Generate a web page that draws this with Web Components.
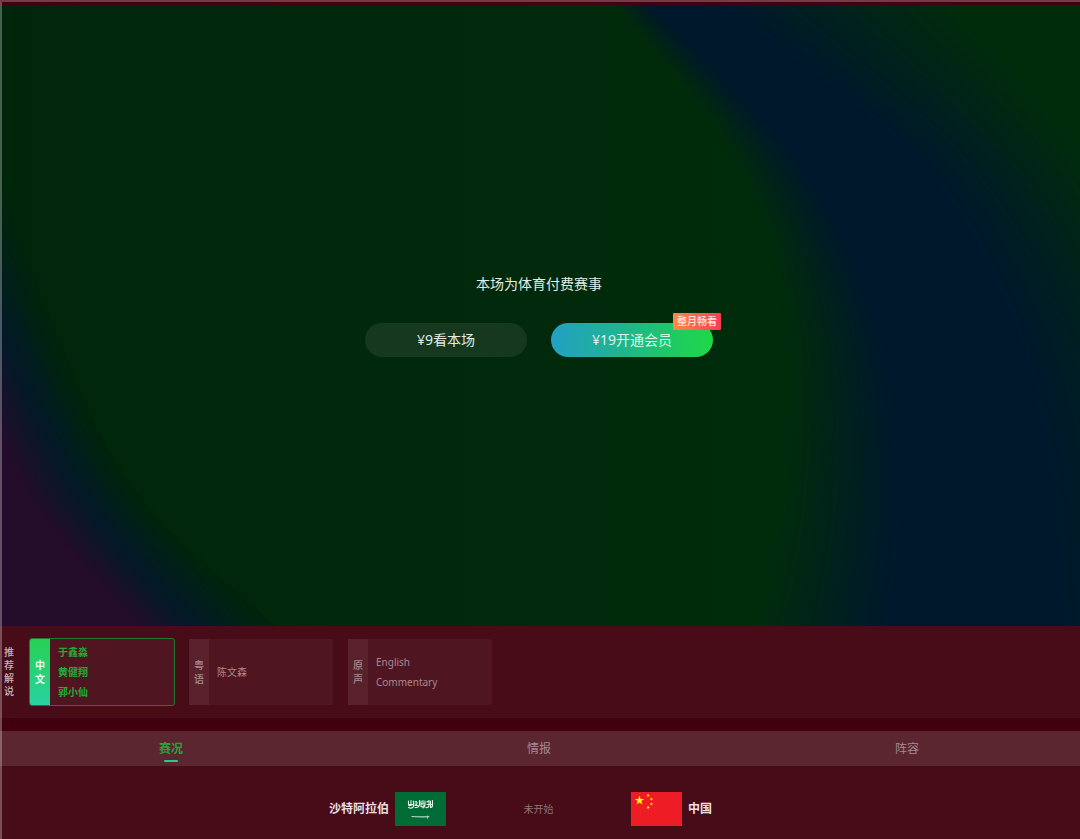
<!DOCTYPE html>
<html lang="zh-CN">
<head>
<meta charset="utf-8">
<meta name="viewport" content="width=device-width, initial-scale=1">
<title>沙特阿拉伯 - 中国</title>
<style>
  body { margin: 0; background: #480c18; font-family: "Noto Sans", "Noto Sans CJK SC", sans-serif; color: #eee; }
</style>
</head>
<body>
<match-page></match-page>

<script>
const define = (name, html, setup) => {
  const tpl = document.createElement('template');
  tpl.innerHTML = html;
  customElements.define(name, class extends HTMLElement {
    constructor() {
      super();
      this.attachShadow({ mode: 'open' }).append(tpl.content.cloneNode(true));
    }
    connectedCallback() { if (setup) setup(this, this.shadowRoot); }
  });
};

/* Backdrop of colour bands: each band blends between two curves, given as x at fixed y stops. */
define('aurora-backdrop', `
<style>
  :host { display: block; }
  svg { display: block; width: 100%; height: 100%; }
</style>
<svg viewBox="0 0 1080 620" preserveAspectRatio="none" aria-hidden="true">
  <defs><linearGradient id="base"><stop offset="0" stop-color="#00250b"/><stop offset=".72" stop-color="#002c0b"/></linearGradient></defs>
  <rect width="1080" height="620" fill="url(#base)"/>
  <g></g>
</svg>`, (host, root) => {
  const ys = [0, 157, 320, 484, 620];
  const green = [0, 44, 11], dark = [0, 37, 11], blue = [0, 24, 44], dusk = [4, 26, 41], purple = [36, 13, 43];
  const mix = (a, b, t) => a.map((v, i) => v + (b[i] - v) * t);
  const curve = (xs, edge) => {
    let d = `M${edge} 0L${xs[0]} 0`;
    for (let i = 0; i < 4; i++) {
      const p = n => { const k = Math.max(0, Math.min(4, n)); return [xs[k], ys[k]]; };
      const [a, b, c, e] = [p(i - 1), p(i), p(i + 1), p(i + 2)];
      d += `C${b[0] + (c[0] - a[0]) / 6} ${b[1] + (c[1] - a[1]) / 6} ${c[0] - (e[0] - b[0]) / 6} ${c[1] - (e[1] - b[1]) / 6} ${c[0]} ${c[1]}`;
    }
    return d + `L${edge} 620Z`;
  };
  let out = '';
  const band = (from, to, c1, c2, edge) => {
    for (let i = 0; i <= 32; i++) {
      const t = i / 32;
      out += `<path d="${curve(mix(from, to, t), edge)}" fill="rgb(${mix(c1, c2, t).map(Math.round)})"/>`;
    }
  };
  band([613, 733, 783, 777, 750], [650, 798, 877, 898, 888], green, blue, 1700);
  band([717, 915, 1010, 1047, 1057], [955, 1092, 1190, 1255, 1270], blue, green, 1700);
  band([-40, -3, 53, 135, 275], [-110, -60, 0, 79, 192], dark, dusk, -400);
  band([-110, -60, 0, 79, 192], [-160, -110, -40, 26, 140], dusk, purple, -400);
  root.querySelector('g').innerHTML = out;
});

define('pay-button', `
<style>
  :host { display: block; position: relative; }
  button { display: block; width: 162px; height: 34px; padding: 0; border: 0; border-radius: 17px;
    background: #15381f; color: #e4ece5; font: inherit; font-size: 14px; line-height: 34px; cursor: pointer; }
  :host([primary]) button { background: linear-gradient(100deg, #229fc8, #20b58c 45%, #1fd64b 95%); color: #dcf7e8; }
  ::slotted([slot=badge]) { position: absolute; top: -10px; right: -8px; padding: 0 4px; border-radius: 1px;
    background: linear-gradient(90deg, #ff8b45, #fb3b55); color: #ffe6dc; font-size: 10px; font-weight: 500; line-height: 17px; }
</style>
<button type="button"><slot></slot></button><slot name="badge"></slot>`);

define('player-stage', `
<style>
  :host { display: grid; min-height: 300px; overflow: hidden; }
  aurora-backdrop, .panel { grid-area: 1 / 1; min-height: 0; }
  aurora-backdrop { contain: size; }
  .panel { position: relative; display: flex; flex-direction: column; align-items: center; justify-content: center; gap: 29px; padding-right: 2px; }
  p { margin: 0; font-size: 14px; line-height: 20px; color: #e4ece5; }
  .row { display: flex; gap: 24px; }
</style>
<aurora-backdrop></aurora-backdrop>
<div class="panel">
  <p>本场为体育付费赛事</p>
  <div class="row">
    <pay-button>¥9看本场</pay-button>
    <pay-button primary>¥19开通会员<span slot="badge">整月畅看</span></pay-button>
  </div>
</div>`);

define('voice-card', `
<style>
  :host { display: block; }
  button { display: flex; align-items: stretch; width: 144px; height: 66px; padding: 0; border: 0; border-radius: 1px;
    background: #4f1520; color: #a98a90; font: inherit; font-size: 10px; text-align: left; cursor: pointer; }
  .lang { display: flex; align-items: center; justify-content: center; width: 20px; background: #59212c; font-weight: 500; line-height: 14px; }
  .lang span { width: 10px; word-break: break-all; }
  .names { display: flex; flex-direction: column; justify-content: center; padding-left: 8px; line-height: 20px; }
  :host([selected]) button { outline: 1px solid #1f7a2e; border-radius: 2px; color: #1fae38; font-weight: 700; }
  :host([selected]) .lang { background: linear-gradient(#27d053, #29d2a0); color: #eafff2; }
</style>
<button type="button"><span class="lang"><span><slot name="lang"></slot></span></span><span class="names"><slot></slot></span></button>`);

define('voice-bar', `
<style>
  :host { display: flex; align-items: center; gap: 15px; padding: 13px 4px; background: #480c18; }
  h2 { width: 10px; margin: 0 1px 0 0; font-size: 10px; font-weight: 500; line-height: 13px; color: #c9b3b8; word-break: break-all; }
  voice-card span { display: block; }
</style>
<h2>推荐解说</h2>
<voice-card selected><b slot="lang">中文</b><span>于鑫淼</span><span>黄健翔</span><span>郭小仙</span></voice-card>
<voice-card><span slot="lang">粤语</span><span>陈文森</span></voice-card>
<voice-card><span slot="lang">原声</span><span>English</span><span>Commentary</span></voice-card>`);

define('match-tabs', `
<style>
  :host { display: block; overflow: hidden; background: #5b2630; border-top: 13px solid #40000f; }
  nav { display: grid; grid-template-columns: repeat(3, 1fr); margin: 0 -11px 0 -13px; }
  button { position: relative; height: 35px; padding: 0; border: 0; background: none; color: #a58a90; font: inherit; font-size: 12px; line-height: 35px; cursor: pointer; }
  [aria-current] { color: #23a53a; font-weight: 700; }
  [aria-current]::after { content: ""; position: absolute; left: calc(50% - 7px); bottom: 4px; width: 14px; height: 2px; border-radius: 1px; background: #2ec78a; }
</style>
<nav>
  <button type="button" aria-current="true">赛况</button>
  <button type="button">情报</button>
  <button type="button">阵容</button>
</nav>`);

define('score-row', `
<style>
  :host { display: grid; grid-template-columns: 1fr 185px 1fr; align-items: center; padding: 26px 3px 13px 0; background: #480c18; }
  .team { display: flex; align-items: center; gap: 6px; font-size: 12px; line-height: 18px; font-weight: 700; color: #ecdfe2; }
  .home { justify-content: flex-end; }
  svg { display: block; width: 51px; height: 34px; }
  .state { text-align: center; font-size: 10px; line-height: 18px; color: #91727a; }
</style>
<div class="team home"><span>沙特阿拉伯</span>
  <svg viewBox="0 0 51 34" aria-hidden="true">
    <rect width="51" height="34" fill="#006c35"/>
    <g fill="none" stroke="#fff" stroke-linecap="round">
      <path stroke-width="1.100" stroke-opacity=".9" d="M13.500 9v3.500q0 1.500 2 1l2-1M16 8.500v3M13.500 15.500q3.500 1.500 5-1V9M20 10q2-1 2 1t-2 1M20 15.500q4 .5 4.500-2.500V8.500M26 9v5.500q1.500 1 3-1M28 8.500v3M30 9v4q0 2-2 3M31 15.500q2 .5 3-1.500V8.500M35.500 9v6.500M37.500 8.500v5.500q-.5 1.500-2 1.500M32 10l1.500-1M14 12.500h4M20 13.500h3M26 12h4M32 12.500h5"/>
      <path stroke-width="1.100" stroke-opacity=".75" d="M17 24.500q5 .6 17 .3M32.500 24v2"/>
    </g>
  </svg>
</div>
<div class="state">未开始</div>
<div class="team">
  <svg viewBox="0 0 51 34" aria-hidden="true">
    <rect width="51" height="34" fill="#ee1c25"/>
    <defs><path id="s" d="M0-1L.225-.309L.951-.309L.363.118L.588.809L0 .382L-.588.809L-.363.118L-.951-.309L-.225-.309Z"/></defs>
    <g fill="#ff0">
      <use href="#s" transform="translate(8.500 8.500) scale(5)"/>
      <use href="#s" transform="translate(17 3.500) rotate(23) scale(1.800)"/>
      <use href="#s" transform="translate(20.400 7) rotate(46) scale(1.800)"/>
      <use href="#s" transform="translate(20.400 12) scale(1.800)"/>
      <use href="#s" transform="translate(17 15.500) rotate(20) scale(1.800)"/>
    </g>
  </svg><span>中国</span>
</div>`);

define('match-page', `
<style>
  :host { position: relative; display: flex; flex-direction: column; box-sizing: border-box; min-height: 100vh; border-top: 2px solid #733c48; }
  :host::before { content: ""; position: absolute; z-index: 1; inset: 0 auto 0 0; width: 2px; background: rgba(255, 255, 255, .28); pointer-events: none; }
  player-stage { flex: 1; border-top: 3px solid #40000f; }
</style>
<player-stage></player-stage>
<voice-bar></voice-bar>
<match-tabs></match-tabs>
<score-row></score-row>`);
</script>
</body>
</html>
